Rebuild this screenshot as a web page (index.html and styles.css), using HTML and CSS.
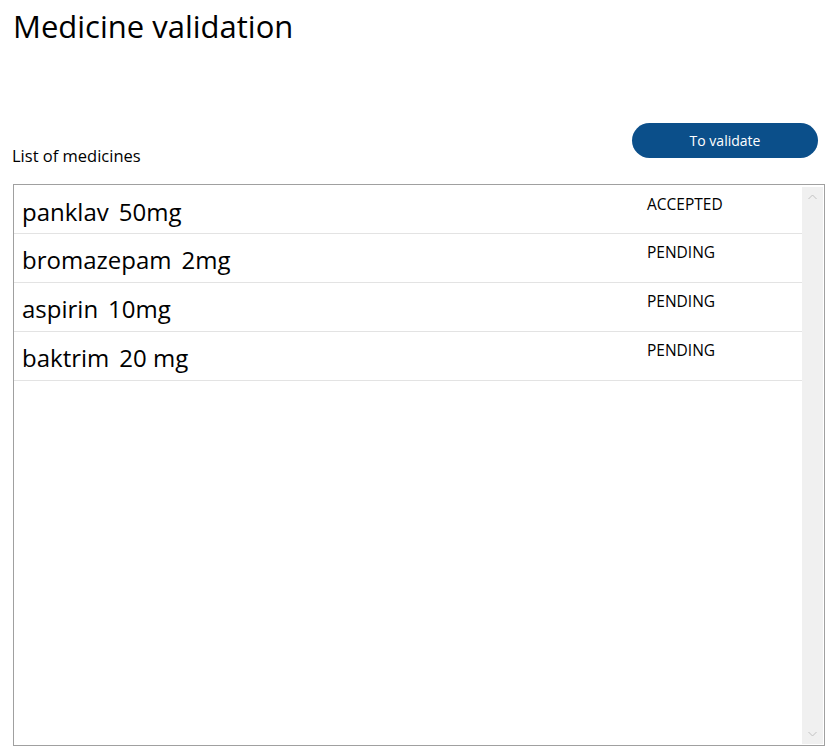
FILE: index.html
```html
<!DOCTYPE html>
<html>
<head>
<meta charset="utf-8">
<link rel="stylesheet" href="styles.css">
</head>
<body>
<div class="page">
  <h1 class="title">Medicine validation</h1>
  <div class="toolbar">
    <span class="label">List of medicines</span>
    <button class="btn">To validate</button>
  </div>
  <div class="listbox">
    <div class="rows">
      <div class="row"><div class="name"><span>panklav</span><span>50mg</span></div><div class="status">ACCEPTED</div></div>
      <div class="row"><div class="name"><span>bromazepam</span><span>2mg</span></div><div class="status">PENDING</div></div>
      <div class="row"><div class="name"><span>aspirin</span><span>10mg</span></div><div class="status">PENDING</div></div>
      <div class="row"><div class="name"><span>baktrim</span><span>20 mg</span></div><div class="status">PENDING</div></div>
    </div>
    <div class="scrollbar">
      <svg class="arrow" width="21" height="20" viewBox="0 0 21 20"><path d="M6.5 12 L10.5 8 L14.5 12" fill="none" stroke="#c2c2c2" stroke-width="1"/></svg>
      <svg class="arrow" width="21" height="20" viewBox="0 0 21 20"><path d="M6.5 8 L10.5 12 L14.5 8" fill="none" stroke="#c2c2c2" stroke-width="1"/></svg>
    </div>
  </div>
</div>
</body>
</html>
```
FILE: styles.css
```css
* { box-sizing: border-box; }
html, body { margin: 0; padding: 0; background: #fff; }
body { font-family: "Comic Sans MS", "Open Sans", sans-serif; color: #000; }
.page { padding: 0 7px 0 13px; height: 748px; display: flex; flex-direction: column; }
.title { margin: 0; padding-top: 6px; font-size: 31px; font-weight: 400; line-height: 40px; height: 123px; }
.toolbar { display: flex; justify-content: space-between; align-items: flex-end; height: 61px; padding: 0 7px 21px 0; }
.label { font-size: 16.5px; line-height: 20px; margin-bottom: -3px; margin-left: -1px; }
.btn { width: 186px; height: 35px; border: none; border-radius: 18px; background: #0b4f8a; color: #fff; font-family: "Open Sans", "Noto Sans", sans-serif; font-size: 14px; padding: 0; margin-bottom: 5px; }
.listbox { border: 1px solid #a0a0a0; height: 562px; display: flex; }
.rows { flex: 1; display: flex; flex-direction: column; padding-top: 1px; }
.row { display: flex; height: 49px; border-bottom: 1px solid #e3e3e3; }
.row:first-child { height: 48px; }
.name { flex: 1; display: flex; gap: 10px; font-size: 24px; padding: 11px 0 0 8px; line-height: 30px; }
.status { width: 155px; font-size: 15.5px; padding-top: 8px; line-height: 20px; }
.scrollbar { width: 21px; margin: 2px 1px 1px 0; background: #f0f0f0; display: flex; flex-direction: column; justify-content: space-between; }
.arrow { display: block; }
```
